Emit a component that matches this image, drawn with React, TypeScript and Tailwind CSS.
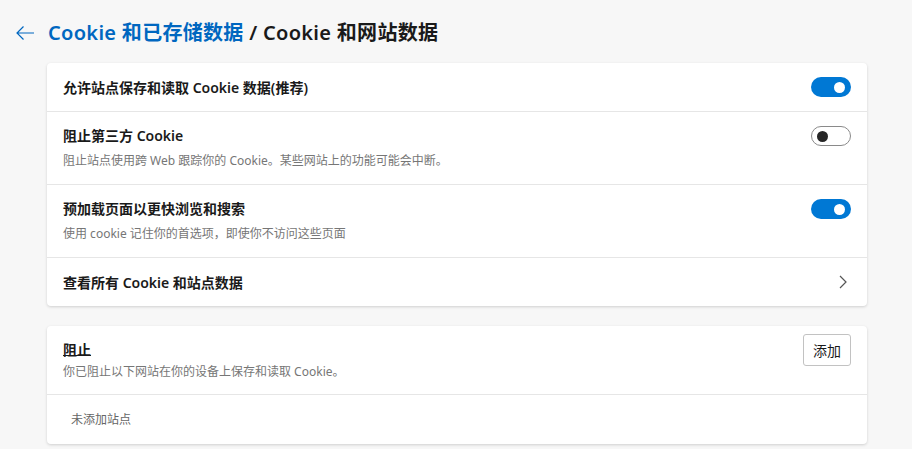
import React, { useState } from 'react';

const font = { fontFamily: '"Noto Sans", "Noto Sans CJK SC", sans-serif' };

function Toggle({ on, onClick }: { on: boolean; onClick: () => void }) {
  return (
    <button
      onClick={onClick}
      className={`relative flex h-[20px] w-[40px] shrink-0 items-center rounded-full ${
        on ? 'bg-[#0078d4]' : 'border border-[#8a8a8a] bg-white'
      }`}
    >
      <span
        className={`absolute h-[11px] w-[11px] rounded-full ${
          on ? 'right-[6px] bg-white' : 'left-[5px] bg-[#262626]'
        }`}
      />
    </button>
  );
}

export default function App() {
  const [allow, setAllow] = useState(true);
  const [thirdParty, setThirdParty] = useState(false);
  const [preload, setPreload] = useState(true);

  return (
    <div className="min-h-screen bg-[#f7f7f7] text-[#1a1a1a]" style={font}>
      {/* Header */}
      <div className="flex h-[63px] items-center pl-[15px] pt-[3px]">
        <svg width="20" height="16" viewBox="0 0 20 16" className="mr-[13px]">
          <path d="M19 8H2M8.5 1.5L2 8l6.5 6.5" fill="none" stroke="#0067c0" strokeWidth="1.2" />
        </svg>
        <h1 className="text-[20px] font-semibold leading-[28px] tracking-[0.3px]">
          <span className="text-[#0067c0]">Cookie 和已存储数据</span>
          <span> / Cookie 和网站数据</span>
        </h1>
      </div>

      <div className="ml-[47px] w-[820px]">
        {/* Card 1 */}
        <div className="rounded-[4px] bg-white shadow-[0_1px_3px_rgba(0,0,0,0.16)]">
          <div className="flex h-[48px] items-center justify-between px-[16px]">
            <span className="text-[14px] font-semibold">允许站点保存和读取 Cookie 数据(推荐)</span>
            <Toggle on={allow} onClick={() => setAllow(!allow)} />
          </div>
          <div className="flex justify-between border-t border-[#e6e6e6] px-[16px] pb-[14px] pt-[14px]">
            <div>
              <div className="text-[14px] font-semibold leading-[20px]">阻止第三方 Cookie</div>
              <div className="mt-[6px] text-[12px] leading-[18px] text-[#767676]">
                阻止站点使用跨 Web 跟踪你的 Cookie。某些网站上的功能可能会中断。
              </div>
            </div>
            <Toggle on={thirdParty} onClick={() => setThirdParty(!thirdParty)} />
          </div>
          <div className="flex justify-between border-t border-[#e6e6e6] px-[16px] pb-[14px] pt-[14px]">
            <div>
              <div className="text-[14px] font-semibold leading-[20px]">预加载页面以更快浏览和搜索</div>
              <div className="mt-[6px] text-[12px] leading-[18px] text-[#767676]">
                使用 cookie 记住你的首选项，即使你不访问这些页面
              </div>
            </div>
            <Toggle on={preload} onClick={() => setPreload(!preload)} />
          </div>
          <div className="flex h-[49px] items-center justify-between border-t border-[#e6e6e6] pl-[16px] pr-[20px]">
            <span className="text-[14px] font-semibold">查看所有 Cookie 和站点数据</span>
            <svg width="8" height="14" viewBox="0 0 8 14">
              <path d="M1 1l6 6-6 6" fill="none" stroke="#555" strokeWidth="1.2" />
            </svg>
          </div>
        </div>

        {/* Card 2 */}
        <div className="mt-[20px] rounded-[4px] bg-white shadow-[0_1px_3px_rgba(0,0,0,0.16)]">
          <div className="flex justify-between pb-[13px] pl-[16px] pr-[16px] pt-[8px]">
            <div className="pt-[6px]">
              <div className="text-[14px] font-semibold leading-[20px] underline underline-offset-[0px]">阻止</div>
              <div className="mt-[3px] text-[12px] leading-[18px] text-[#767676]">
                你已阻止以下网站在你的设备上保存和读取 Cookie。
              </div>
            </div>
            <button className="h-[32px] w-[48px] rounded-[3px] border border-[#c2c2c2] bg-white text-[14px] text-[#1a1a1a]">
              添加
            </button>
          </div>
          <div className="flex h-[50px] items-center border-t border-[#e6e6e6] pl-[24px] text-[12px] text-[#666]">
            未添加站点
          </div>
        </div>
      </div>
    </div>
  );
}
